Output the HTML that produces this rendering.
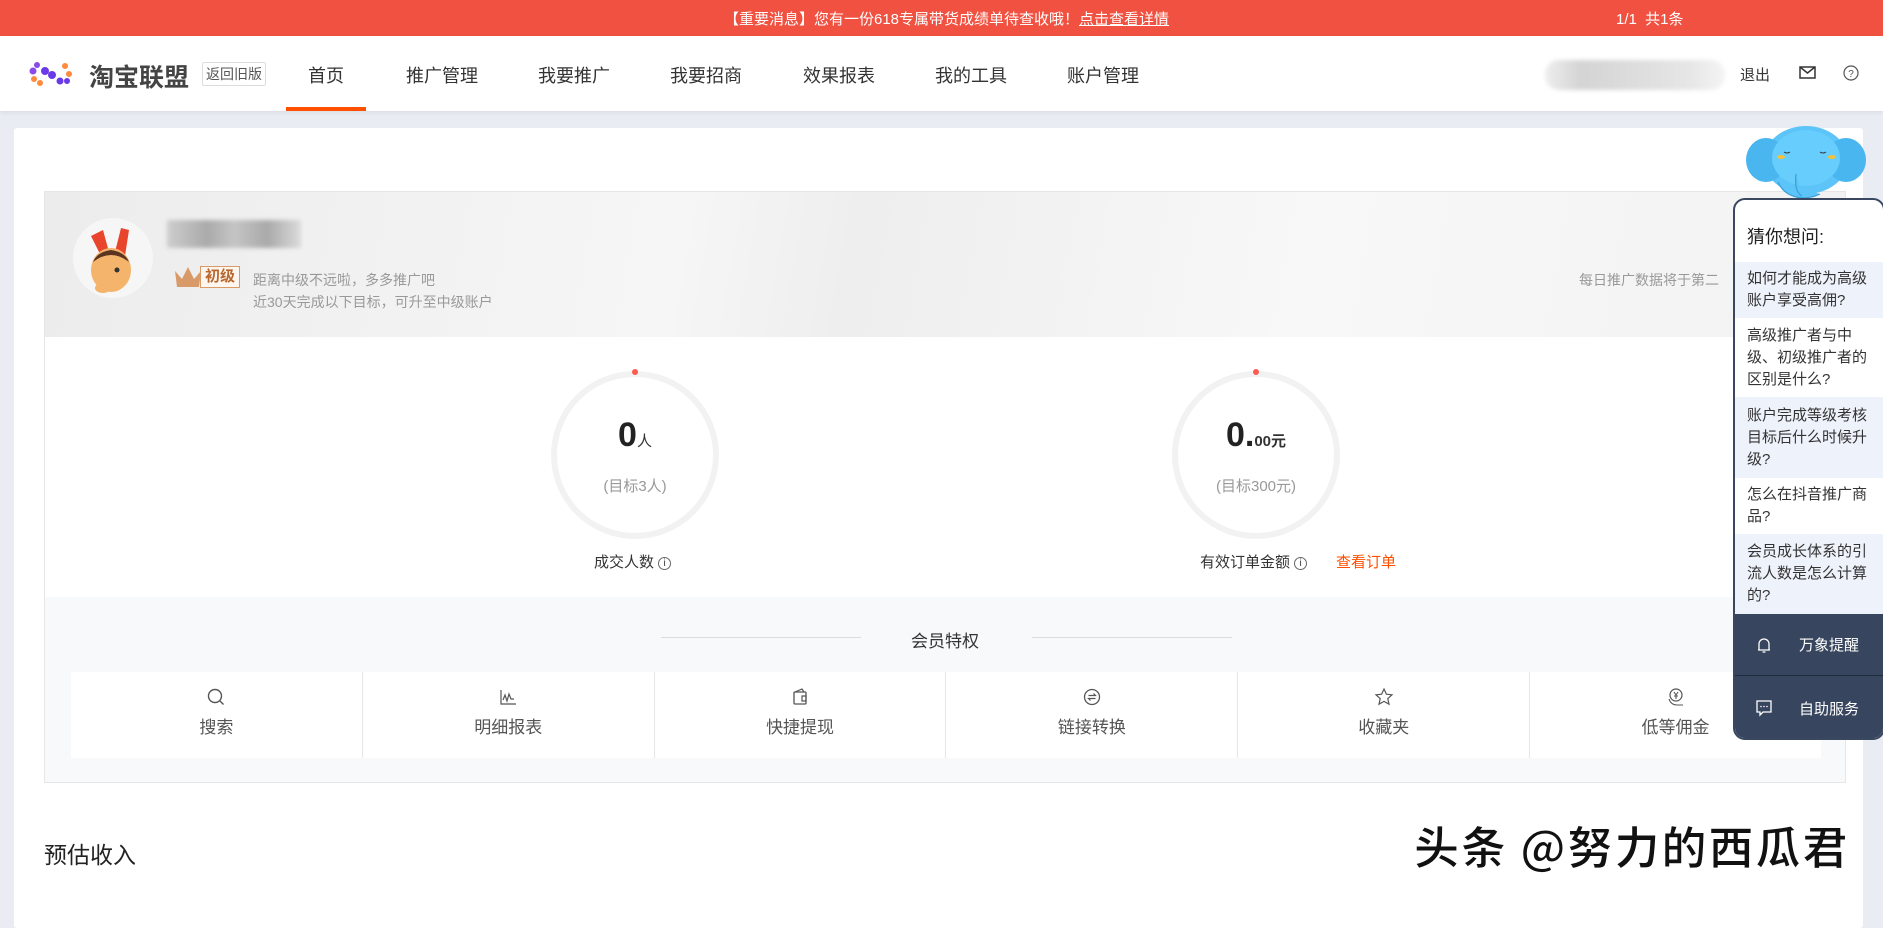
<!DOCTYPE html>
<html><head><meta charset="utf-8"><style>
*{margin:0;padding:0;box-sizing:border-box}
body{width:1883px;height:892px;overflow:hidden;background:#eaecf3;font-family:"Liberation Sans","Noto Sans CJK SC",sans-serif;position:relative;color:#333}
.abs{position:absolute}
.top{left:0;top:0;width:1883px;height:36px;background:#f05140;color:#fff;font-size:15px}
.nav{left:0;top:36px;width:1883px;height:75px;background:#fff;box-shadow:0 2px 4px rgba(0,0,0,.06)}
.nav .it{position:absolute;top:26px;font-size:18px;color:#333}
.card{left:14px;top:128px;width:1849px;height:800px;background:#fff;border-radius:3px}
.panel{left:44px;top:191px;width:1802px;height:592px;border:1px solid #e6e6e6}
.hdr{left:0;top:0;width:1800px;height:145px;background:linear-gradient(100deg,#ececec 0%,#f6f6f6 35%,#eeeeee 45%,#f8f8f8 70%,#f2f2f2 100%)}
.gray{color:#999;font-size:14px}
.ring{width:168px;height:168px;border:6px solid #f2f2f2;border-radius:50%}
.grid{left:26px;top:480px;width:1750px;height:86px;background:#fff;display:flex}
.grid div{flex:1;border-right:1px solid #e6e6e6;text-align:center;color:#555;font-size:17px;padding-top:15px}
.grid div:last-child{border-right:none}
.grid svg{display:block;margin:0 auto 6px}
.side{left:1733px;top:198px;width:152px;height:542px;background:#fff;border:2px solid #3a4760;border-radius:12px;overflow:hidden}
.q{font-size:15px;line-height:22px;color:#333;padding:0 10px 0 12px;display:flex;align-items:center}
.q.b{background:#eef2fb}
.dk{background:#38455e;color:#fff;font-size:15px}
</style></head><body>
<div class="abs top"><span class="abs" style="left:724px;top:8px">【重要消息】您有一份618专属带货成绩单待查收哦！<u>点击查看详情</u></span><span class="abs" style="left:1616px;top:8px">1/1 &nbsp;共1条</span></div>
<div class="abs nav">
<svg class="abs" style="left:28px;top:24px" width="52" height="28" viewBox="0 0 52 28"><circle cx="5" cy="11" r="3.5" fill="#8a4be8"/><circle cx="9" cy="5" r="3" fill="#8a4be8"/><circle cx="6" cy="19" r="3" fill="#ff8a3d"/><circle cx="12" cy="23" r="3" fill="#ff8a3d"/><circle cx="17" cy="11" r="4" fill="#6a3ae8"/><circle cx="24" cy="15" r="4" fill="#6a3ae8"/><circle cx="32" cy="21" r="3.5" fill="#6a3ae8"/><circle cx="37" cy="6" r="3" fill="#ff8a3d"/><circle cx="41" cy="14" r="3" fill="#ff8a3d"/><circle cx="39" cy="21" r="3" fill="#6a3ae8"/></svg>
<span class="abs" style="left:89px;top:22px;font-size:25px;font-weight:bold;color:#444">淘宝联盟</span>
<span class="abs" style="left:202px;top:26px;font-size:14px;color:#555;border:1px solid #ddd;padding:1px 3px;border-radius:2px">返回旧版</span>
<span class="it" style="left:308px">首页</span><span class="it" style="left:406px">推广管理</span><span class="it" style="left:538px">我要推广</span><span class="it" style="left:670px">我要招商</span><span class="it" style="left:803px">效果报表</span><span class="it" style="left:935px">我的工具</span><span class="it" style="left:1067px">账户管理</span>
<div class="abs" style="left:286px;top:71px;width:80px;height:4px;background:#ff4f00"></div>
<div class="abs" style="left:1545px;top:24px;width:180px;height:30px;background:linear-gradient(90deg,#eee,#d4d4d4 20%,#ddd 50%,#e6e6e6 80%,#f4f4f4);border-radius:14px;filter:blur(2px)"></div>
<span class="abs" style="left:1740px;top:28px;font-size:15px;color:#333">退出</span>
<svg class="abs" style="left:1799px;top:30px" width="17" height="13" viewBox="0 0 17 13"><rect x="1" y="1" width="15" height="11" fill="none" stroke="#333" stroke-width="1.5"/><path d="M1 1l7.5 6L16 1" fill="none" stroke="#333" stroke-width="1.5"/></svg>
<svg class="abs" style="left:1843px;top:29px" width="16" height="16" viewBox="0 0 16 16"><circle cx="8" cy="8" r="7" fill="none" stroke="#555" stroke-width="1.2"/><text x="8" y="12" font-size="10" text-anchor="middle" fill="#555" font-family="Liberation Sans">?</text></svg>
</div>
<div class="abs card"></div>
<div class="abs panel">
<div class="abs hdr"></div>
<svg class="abs" style="left:26px;top:24px" width="84" height="84" viewBox="0 0 84 84"><circle cx="42" cy="42" r="40" fill="#f6f6f6"/><path d="M20 20l10 20 8-4-6-22zM50 12l-6 24 10 4 4-26z" fill="#e8452c"/><ellipse cx="40" cy="54" rx="20" ry="22" fill="#f4b46c"/><path d="M22 46q18-14 36 0q-4-10-18-12q-14 2-18 12z" fill="#5a3420"/><ellipse cx="32" cy="72" rx="8" ry="5" fill="#f4b46c"/><circle cx="46" cy="54" r="2.5" fill="#333"/></svg>
<div class="abs" style="left:122px;top:28px;width:134px;height:28px;background:linear-gradient(90deg,#c6c6c6,#9a9a9a 30%,#bbb 50%,#999 75%,#d6d6d6);filter:blur(2px);opacity:.8"></div>
<svg class="abs" style="left:128px;top:73px" width="30" height="24" viewBox="0 0 30 24"><path d="M2 6l7 8 6-12 6 12 7-8-2 16H4z" fill="#d99a6a"/></svg>
<span class="abs" style="left:155px;top:74px;font-size:15px;font-weight:bold;color:#b8682e;background:#fff7ef;border:1px solid #d99a6a;padding:0 4px;line-height:20px">初级</span>
<span class="abs gray" style="left:208px;top:78px">距离中级不远啦，多多推广吧</span>
<span class="abs gray" style="left:208px;top:100px">近30天完成以下目标，可升至中级账户</span>
<span class="abs gray" style="left:1534px;top:78px">每日推广数据将于第二</span>
<div class="abs ring" style="left:506px;top:179px"></div><div class="abs" style="left:587px;top:177px;width:6px;height:6px;border-radius:50%;background:#ff5a50"></div>
<div class="abs" style="left:506px;top:224px;width:168px;text-align:center"><b style="font-size:34px;color:#222">0</b><span style="font-size:15px">人</span></div>
<div class="abs" style="left:506px;top:283px;width:168px;text-align:center;color:#999;font-size:15px">(目标3人)</div>
<span class="abs" style="left:549px;top:359px;font-size:15px">成交人数 <span style="display:inline-block;width:13px;height:13px;border:1px solid #666;border-radius:50%;font-size:10px;text-align:center;line-height:11px;vertical-align:1px">i</span></span>
<div class="abs ring" style="left:1127px;top:179px"></div><div class="abs" style="left:1208px;top:177px;width:6px;height:6px;border-radius:50%;background:#ff5a50"></div>
<div class="abs" style="left:1127px;top:224px;width:168px;text-align:center"><b style="font-size:34px;color:#222">0.</b><b style="font-size:15px;color:#333">00元</b></div>
<div class="abs" style="left:1127px;top:283px;width:168px;text-align:center;color:#999;font-size:15px">(目标300元)</div>
<span class="abs" style="left:1155px;top:359px;font-size:15px">有效订单金额 <span style="display:inline-block;width:13px;height:13px;border:1px solid #666;border-radius:50%;font-size:10px;text-align:center;line-height:11px;vertical-align:1px">i</span></span>
<span class="abs" style="left:1291px;top:359px;font-size:15px;color:#ff5000">查看订单</span>
<div class="abs" style="left:0;top:405px;width:1800px;height:185px;background:#f8f9fb">
<div class="abs" style="left:616px;top:40px;width:200px;height:1px;background:#ddd"></div>
<span class="abs" style="left:866px;top:30px;font-size:17px;color:#333">会员特权</span>
<div class="abs" style="left:987px;top:40px;width:200px;height:1px;background:#ddd"></div>
</div>
<div class="abs grid" style="top:480px">
<div><svg width="20" height="20" viewBox="0 0 20 20"><circle cx="9" cy="9" r="6.5" fill="none" stroke="#555" stroke-width="1.4"/><path d="M14 14l3.5 3.5" stroke="#555" stroke-width="1.4"/></svg>搜索</div>
<div><svg width="20" height="20" viewBox="0 0 20 20"><path d="M3 3v14h15M5 13l2-5 2 6 2-7 2 5h3" fill="none" stroke="#555" stroke-width="1.2"/></svg>明细报表</div>
<div><svg width="20" height="20" viewBox="0 0 20 20"><rect x="4" y="5" width="12" height="12" rx="1" fill="none" stroke="#555" stroke-width="1.3"/><path d="M5 5l7-3 2 3M12 9h4v5h-4z" fill="none" stroke="#555" stroke-width="1.2"/></svg>快捷提现</div>
<div><svg width="20" height="20" viewBox="0 0 20 20"><circle cx="10" cy="10" r="7.5" fill="none" stroke="#555" stroke-width="1.3"/><path d="M6.5 8.5h7l-2-2M13.5 11.5h-7l2 2" fill="none" stroke="#555" stroke-width="1.2"/></svg>链接转换</div>
<div><svg width="20" height="20" viewBox="0 0 20 20"><path d="M10 2l2.4 5.2 5.6.6-4.2 3.8 1.2 5.6L10 14.4 5 17.2l1.2-5.6L2 7.8l5.6-.6z" fill="none" stroke="#555" stroke-width="1.2"/></svg>收藏夹</div>
<div><svg width="20" height="20" viewBox="0 0 20 20"><circle cx="10" cy="8" r="6" fill="none" stroke="#555" stroke-width="1.2"/><path d="M8 5l2 3 2-3M10 8v4M8 9h4M3 12q2 6 8 6h6" fill="none" stroke="#555" stroke-width="1.1"/></svg>低等佣金</div>
</div>
</div>
<span class="abs" style="left:44px;top:836px;font-size:23px;color:#222">预估收入</span>
<span class="abs" style="left:1414px;top:812px;font-size:45px;font-weight:bold;letter-spacing:2px;color:#111;-webkit-text-stroke:1px #fff;font-family:'Noto Sans CJK SC',sans-serif;white-space:nowrap">头条 @努力的西瓜君</span>
<svg class="abs" style="left:1744px;top:124px" width="124" height="78" viewBox="0 0 124 78"><ellipse cx="62" cy="36" rx="42" ry="34" fill="#5cc4f8"/><ellipse cx="22" cy="36" rx="20" ry="22" fill="#4ab6f0"/><ellipse cx="102" cy="36" rx="20" ry="22" fill="#4ab6f0"/><ellipse cx="62" cy="34" rx="34" ry="28" fill="#66cdfc"/><path d="M34 58q6 14 24 16q10 0 18-4M52 50q-2 18 6 22" fill="#5cc4f8" stroke="#3a9fd6" stroke-width="1.2"/><path d="M40 28q3 2 6 0M76 28q3 2 6 0" stroke="#333" fill="none"/><ellipse cx="37" cy="33" rx="4" ry="2" fill="#f2c23a"/><ellipse cx="88" cy="33" rx="4" ry="2" fill="#f2c23a"/></svg>
<div class="abs side">
<div style="height:62px;padding:23px 0 0 12px;font-size:18px;color:#222">猜你想问:</div>
<div class="q b" style="height:56px">如何才能成为高级账户享受高佣?</div>
<div class="q" style="height:79px">高级推广者与中级、初级推广者的区别是什么?</div>
<div class="q b" style="height:81px">账户完成等级考核目标后什么时候升级?</div>
<div class="q" style="height:56px">怎么在抖音推广商品?</div>
<div class="q b" style="height:80px">会员成长体系的引流人数是怎么计算的?</div>
<div class="dk" style="height:62px;display:flex;align-items:center;border-bottom:1px solid #222b3a"><svg style="margin:0 26px 0 20px" width="18" height="18" viewBox="0 0 18 18"><path d="M4 14V8a5 5 0 0110 0v6H3h12M7.5 16h3" fill="none" stroke="#fff" stroke-width="1.3"/></svg>万象提醒</div>
<div class="dk" style="height:64px;display:flex;align-items:center"><svg style="margin:0 26px 0 20px" width="18" height="18" viewBox="0 0 18 18"><path d="M2 2h14v11H8l-3 3v-3H2z" fill="none" stroke="#fff" stroke-width="1.3"/><circle cx="6" cy="7.5" r=".8" fill="#fff"/><circle cx="9" cy="7.5" r=".8" fill="#fff"/><circle cx="12" cy="7.5" r=".8" fill="#fff"/></svg>自助服务</div>
</div>
</body></html>
